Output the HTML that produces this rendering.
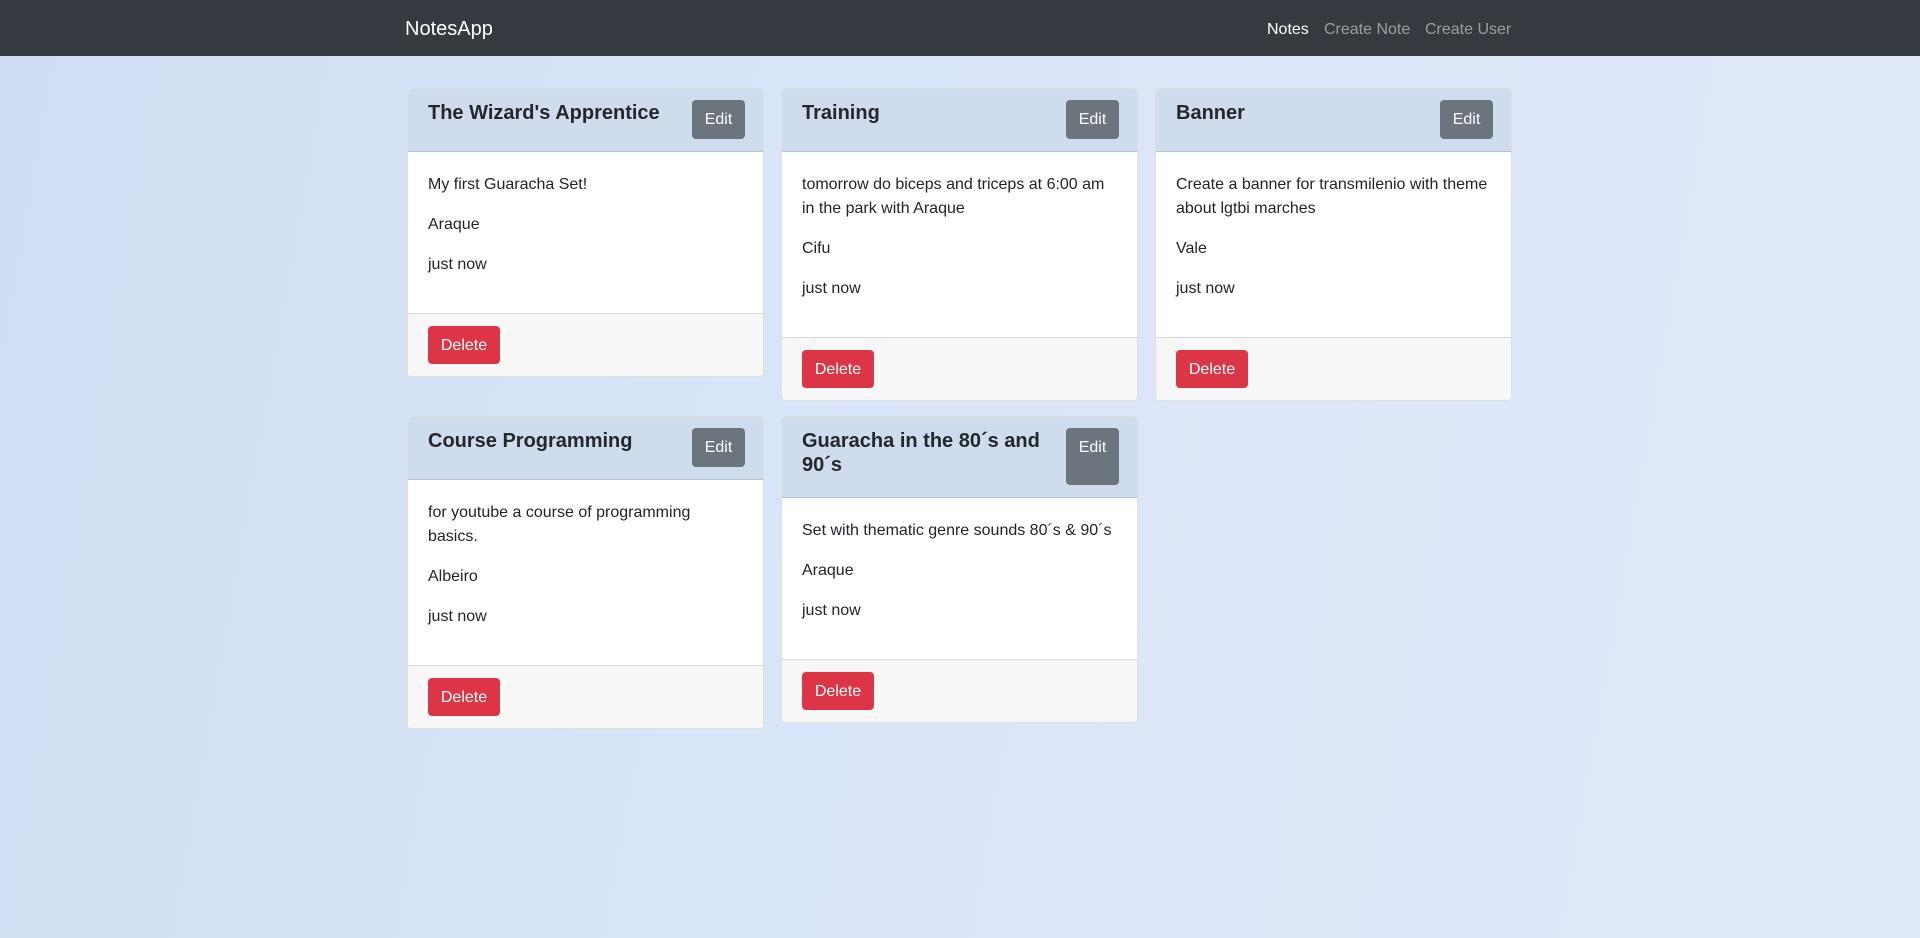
<!DOCTYPE html>
<html><head><meta charset="utf-8"><style>
*{box-sizing:border-box;margin:0;padding:0}
body{width:1920px;height:938px;overflow:hidden;font-family:"Segoe UI","Liberation Sans",sans-serif;color:#212529;background:linear-gradient(100deg,#d0def3 0%,#dae6f8 50%,#e1eafb 100%);position:relative;font-size:16px;line-height:24px}
.nav{position:absolute;left:0;top:0;width:1920px;height:56px;background:#343a40}
.nav span{position:absolute;top:18px;white-space:nowrap}
.brand{left:405px;top:14px!important;font-size:20px;line-height:30px;color:#fff}
.l{color:rgba(255,255,255,.5)}
.card{position:absolute;width:357px;background:#fff;border:1px solid rgba(0,0,0,.125);border-radius:4px;overflow:hidden}
.hd{background:#cfdcee;border-bottom:1px solid rgba(0,0,0,.125);padding:12px 20px;position:relative;min-height:63px}
.hd h5{font-size:20px;font-weight:bold;line-height:24px;margin-bottom:8px;white-space:nowrap;color:#24272b}
.edit{position:absolute;right:18px;top:11px;bottom:12px;width:53px;background:#6c757d;color:#fff;border-radius:4px;text-align:center;line-height:40px}
.bd{padding:21px 20px 20px}
.bd p{margin-bottom:16px;white-space:nowrap}
.ft{background:#f7f7f7;border-top:1px solid rgba(0,0,0,.125);padding:12px 20px}
.del{display:inline-block;width:72px;height:38px;background:#dc3545;color:#fff;border-radius:4px;text-align:center;line-height:39px}
</style></head><body>
<div class="nav"><span class="brand">NotesApp</span><span style="left:1267px;color:#fff">Notes</span><span class="l" style="left:1324px">Create Note</span><span class="l" style="left:1425px">Create User</span></div>

<div class="card" style="left:407px;top:88px"><div class="hd"><h5>The Wizard's Apprentice</h5><div class="edit">Edit</div></div><div class="bd"><p>My first Guaracha Set!</p><p>Araque</p><p>just now</p></div><div class="ft"><span class="del">Delete</span></div></div>

<div class="card" style="left:781px;top:88px"><div class="hd"><h5>Training</h5><div class="edit">Edit</div></div><div class="bd"><p>tomorrow do biceps and triceps at 6:00 am<br>in the park with Araque</p><p>Cifu</p><p>just now</p></div><div class="ft"><span class="del">Delete</span></div></div>

<div class="card" style="left:1155px;top:88px"><div class="hd"><h5>Banner</h5><div class="edit">Edit</div></div><div class="bd"><p>Create a banner for transmilenio with theme<br>about lgtbi marches</p><p>Vale</p><p>just now</p></div><div class="ft"><span class="del">Delete</span></div></div>

<div class="card" style="left:407px;top:416px"><div class="hd"><h5>Course Programming</h5><div class="edit">Edit</div></div><div class="bd"><p>for youtube a course of programming<br>basics.</p><p>Albeiro</p><p>just now</p></div><div class="ft"><span class="del">Delete</span></div></div>

<div class="card" style="left:781px;top:416px"><div class="hd"><h5>Guaracha in the 80´s and<br>90´s</h5><div class="edit">Edit</div></div><div class="bd"><p>Set with thematic genre sounds 80´s &amp; 90´s</p><p>Araque</p><p>just now</p></div><div class="ft"><span class="del">Delete</span></div></div>
</body></html>
